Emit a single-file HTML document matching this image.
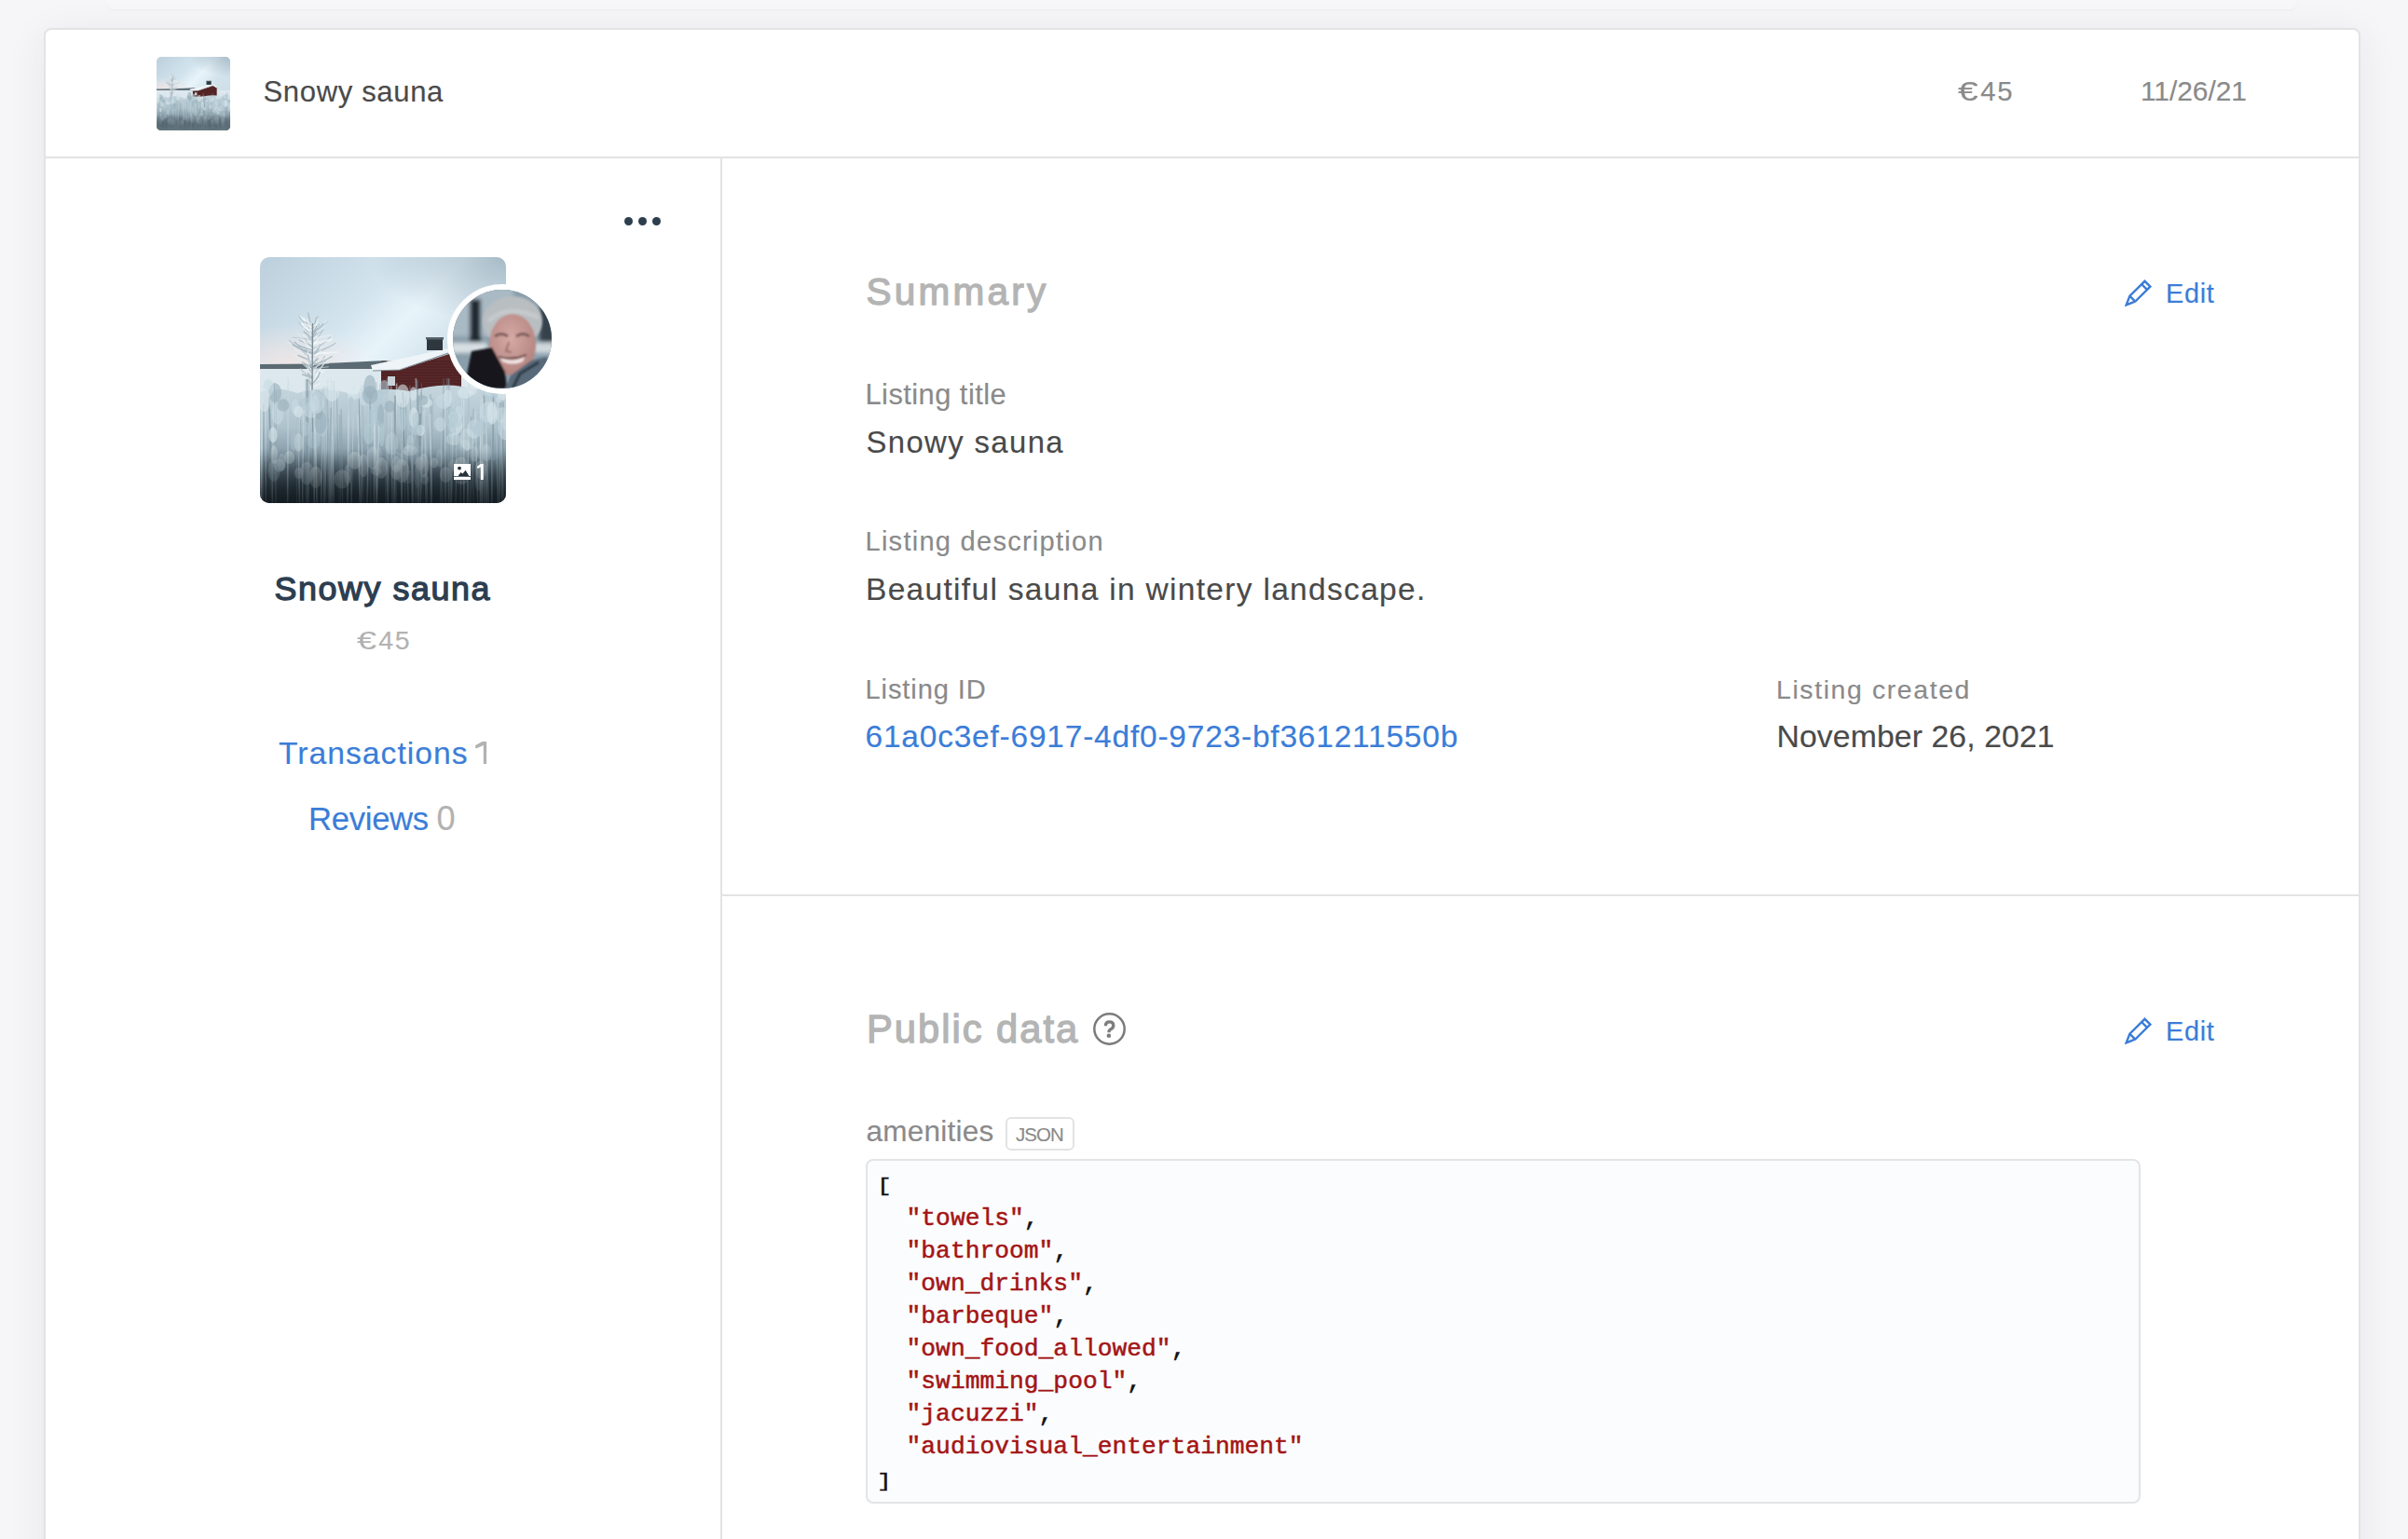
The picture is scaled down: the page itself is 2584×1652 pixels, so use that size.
<!DOCTYPE html>
<html><head><meta charset="utf-8">
<style>
html,body{margin:0;padding:0;}
body{width:2584px;height:1652px;overflow:hidden;background:#f6f6f8;position:relative;font-family:"Liberation Sans",sans-serif;}
.abs{position:absolute;white-space:nowrap;line-height:1;-webkit-text-stroke:0.15px currentColor;}
#strip{position:absolute;left:114px;top:-21px;width:2351px;height:31px;background:#f7f7f9;border-radius:0 0 8px 8px;box-shadow:0 1px 2px rgba(0,0,0,0.04);}
#card{position:absolute;left:47px;top:30px;width:2482px;height:1700px;background:#fff;border:2px solid #e3e3e3;border-radius:8px;box-shadow:0 8px 44px rgba(40,40,70,0.075);}
.hline{position:absolute;height:2px;background:#e3e3e3;}
.vline{position:absolute;width:2px;background:#e3e3e3;}
.gray{color:#8a8a8a;}
.dark{color:#4a4a4a;}
.blue{color:#3b7dd8;}
</style></head>
<body>
<svg width="0" height="0" style="position:absolute"><defs><linearGradient id="dark" x1="0" y1="0" x2="0" y2="1"><stop offset="0" stop-color="#1a242b" stop-opacity="0"/><stop offset="1" stop-color="#141c22" stop-opacity="0.85"/></linearGradient></defs><symbol id="ph" viewBox="0 0 264 264"><defs><linearGradient id="sky" x1="0" y1="0" x2="1" y2="1"><stop offset="0" stop-color="#bccfdc"/><stop offset="0.3" stop-color="#d3e4ee"/><stop offset="0.42" stop-color="#e8f4fa"/><stop offset="0.56" stop-color="#d3e3ec"/><stop offset="1" stop-color="#c6d7e2"/></linearGradient><linearGradient id="reed" x1="0" y1="0" x2="0" y2="1"><stop offset="0" stop-color="#c6d6de"/><stop offset="0.35" stop-color="#afc3cd"/><stop offset="0.58" stop-color="#879da9"/><stop offset="0.76" stop-color="#4b5b66"/><stop offset="0.9" stop-color="#27333b"/><stop offset="1" stop-color="#141c22"/></linearGradient><radialGradient id="glow" cx="0.12" cy="0.9" r="0.35"><stop offset="0" stop-color="#f3e6e4" stop-opacity="0.9"/><stop offset="1" stop-color="#f3e6e4" stop-opacity="0"/></radialGradient><radialGradient id="tr" cx="1" cy="0" r="0.55"><stop offset="0" stop-color="#8fa6b4" stop-opacity="0.7"/><stop offset="1" stop-color="#93a8b5" stop-opacity="0"/></radialGradient></defs><rect width="264" height="264" fill="url(#sky)"/><rect width="264" height="130" fill="url(#glow)"/><rect width="264" height="130" fill="url(#tr)"/><path d="M0 115 L60 114.5 L135 111 L140 113 L140 120.5 L0 120.5 Z" fill="#5c6b73"/><rect x="0" y="120" width="264" height="35" fill="#dde8ee"/><g fill="none" stroke-linecap="round"><path d="M56 94.0 Q52.4 92.0 48.8 82.2" stroke="#e6eef2" stroke-width="0.8" opacity="0.85"/><path d="M56 111.6 Q67.2 109.6 78.4 104.4" stroke="#e6eef2" stroke-width="0.8" opacity="0.85"/><path d="M56 78.2 Q51.5 76.2 47.0 64.8" stroke="#e6eef2" stroke-width="1.2" opacity="0.85"/><path d="M56 111.6 Q53.4 109.6 50.7 97.9" stroke="#e6eef2" stroke-width="0.7" opacity="0.85"/><path d="M56 130.4 Q59.3 128.4 62.6 121.5" stroke="#e6eef2" stroke-width="1.1" opacity="0.85"/><path d="M56 118.4 Q53.2 116.4 50.3 111.9" stroke="#f2f6f8" stroke-width="1.1" opacity="0.85"/><path d="M56 76.3 Q58.3 74.3 60.6 64.9" stroke="#a0b1ba" stroke-width="1.1" opacity="0.85"/><path d="M56 134.8 Q59.1 132.8 62.3 124.4" stroke="#f2f6f8" stroke-width="0.9" opacity="0.85"/><path d="M56 111.1 Q48.6 109.1 41.2 105.6" stroke="#a0b1ba" stroke-width="1.5" opacity="0.85"/><path d="M56 80.0 Q51.3 78.0 46.6 66.8" stroke="#f2f6f8" stroke-width="1.0" opacity="0.85"/><path d="M56 137.4 Q53.8 135.4 51.6 131.3" stroke="#b7c6ce" stroke-width="1.0" opacity="0.85"/><path d="M56 105.8 Q67.5 103.8 78.9 92.4" stroke="#e6eef2" stroke-width="1.1" opacity="0.85"/><path d="M56 117.2 Q53.5 115.2 51.0 111.7" stroke="#a0b1ba" stroke-width="1.0" opacity="0.85"/><path d="M56 117.5 Q58.2 115.5 60.4 108.1" stroke="#f2f6f8" stroke-width="1.1" opacity="0.85"/><path d="M56 86.8 Q51.6 84.8 47.1 80.1" stroke="#a0b1ba" stroke-width="1.4" opacity="0.85"/><path d="M56 77.5 Q51.5 75.5 46.9 65.6" stroke="#f2f6f8" stroke-width="1.4" opacity="0.85"/><path d="M56 90.9 Q62.0 88.9 68.0 77.4" stroke="#a0b1ba" stroke-width="0.8" opacity="0.85"/><path d="M56 84.0 Q59.8 82.0 63.5 72.0" stroke="#a0b1ba" stroke-width="0.8" opacity="0.85"/><path d="M56 91.2 Q52.6 89.2 49.2 77.7" stroke="#b7c6ce" stroke-width="1.3" opacity="0.85"/><path d="M56 107.1 Q46.9 105.1 37.8 99.6" stroke="#e6eef2" stroke-width="1.4" opacity="0.85"/><path d="M56 136.7 Q52.2 134.7 48.5 129.9" stroke="#a0b1ba" stroke-width="0.8" opacity="0.85"/><path d="M56 115.1 Q58.6 113.1 61.1 107.8" stroke="#f2f6f8" stroke-width="0.8" opacity="0.85"/><path d="M56 112.8 Q53.0 110.8 50.0 99.5" stroke="#e6eef2" stroke-width="1.2" opacity="0.85"/><path d="M56 76.8 Q59.1 74.8 62.3 63.3" stroke="#b7c6ce" stroke-width="1.2" opacity="0.85"/><path d="M56 104.2 Q59.4 102.2 62.8 96.5" stroke="#a0b1ba" stroke-width="0.9" opacity="0.85"/><path d="M56 81.8 Q48.8 79.8 41.6 69.9" stroke="#a0b1ba" stroke-width="0.8" opacity="0.85"/><path d="M56 73.6 Q49.7 71.6 43.5 63.3" stroke="#f2f6f8" stroke-width="1.4" opacity="0.85"/><path d="M56 123.6 Q52.1 121.6 48.1 113.2" stroke="#e6eef2" stroke-width="0.9" opacity="0.85"/><path d="M56 96.9 Q52.1 94.9 48.2 87.3" stroke="#b7c6ce" stroke-width="1.2" opacity="0.85"/><path d="M56 125.6 Q62.5 123.6 69.0 113.8" stroke="#f2f6f8" stroke-width="1.3" opacity="0.85"/><path d="M56 87.4 Q62.5 85.4 68.9 73.5" stroke="#e6eef2" stroke-width="1.3" opacity="0.85"/><path d="M56 104.1 Q51.6 102.1 47.2 96.7" stroke="#b7c6ce" stroke-width="1.4" opacity="0.85"/><path d="M56 139.2 Q59.8 137.2 63.5 136.0" stroke="#f2f6f8" stroke-width="1.1" opacity="0.85"/><path d="M56 95.0 Q48.7 93.0 41.5 87.2" stroke="#e6eef2" stroke-width="1.2" opacity="0.85"/><path d="M56 126.4 Q53.5 124.4 51.0 115.0" stroke="#a0b1ba" stroke-width="1.3" opacity="0.85"/><path d="M56 104.5 Q51.8 102.5 47.6 101.5" stroke="#b7c6ce" stroke-width="1.5" opacity="0.85"/><path d="M56 121.1 Q50.6 119.1 45.3 110.4" stroke="#e6eef2" stroke-width="0.8" opacity="0.85"/><path d="M56 80.6 Q53.0 78.6 50.0 71.3" stroke="#f2f6f8" stroke-width="1.2" opacity="0.85"/><path d="M56 104.3 Q69.6 102.3 83.1 102.0" stroke="#f2f6f8" stroke-width="1.3" opacity="0.85"/><path d="M56 121.4 Q53.3 119.4 50.5 114.2" stroke="#f2f6f8" stroke-width="1.4" opacity="0.85"/><path d="M56 128.2 Q59.1 126.2 62.2 120.2" stroke="#b7c6ce" stroke-width="1.3" opacity="0.85"/><path d="M56 94.2 Q48.2 92.2 40.4 81.2" stroke="#e6eef2" stroke-width="1.0" opacity="0.85"/><path d="M56 103.2 Q46.6 101.2 37.2 91.2" stroke="#a0b1ba" stroke-width="1.4" opacity="0.85"/><path d="M56 80.9 Q53.0 78.9 50.0 69.6" stroke="#a0b1ba" stroke-width="1.2" opacity="0.85"/><path d="M56 124.8 Q58.9 122.8 61.8 116.1" stroke="#e6eef2" stroke-width="1.0" opacity="0.85"/><path d="M56 107.2 Q47.7 105.2 39.3 94.6" stroke="#e6eef2" stroke-width="0.7" opacity="0.85"/><path d="M56 85.0 Q58.3 83.0 60.7 76.3" stroke="#a0b1ba" stroke-width="1.3" opacity="0.85"/><path d="M56 134.0 Q52.5 132.0 49.0 123.7" stroke="#f2f6f8" stroke-width="1.1" opacity="0.85"/><path d="M56 108.3 Q48.7 106.3 41.4 95.2" stroke="#b7c6ce" stroke-width="1.4" opacity="0.85"/><path d="M56 85.8 Q61.6 83.8 67.3 78.5" stroke="#a0b1ba" stroke-width="0.8" opacity="0.85"/><path d="M56 88.4 Q53.3 86.4 50.7 75.6" stroke="#e6eef2" stroke-width="0.8" opacity="0.85"/><path d="M56 120.7 Q62.9 118.7 69.8 107.1" stroke="#f2f6f8" stroke-width="0.9" opacity="0.85"/><path d="M56 136.8 Q59.0 134.8 62.0 132.8" stroke="#f2f6f8" stroke-width="1.0" opacity="0.85"/><path d="M56 107.1 Q61.9 105.1 67.8 104.0" stroke="#b7c6ce" stroke-width="1.0" opacity="0.85"/><path d="M56 95.0 Q49.0 93.0 42.0 89.0" stroke="#a0b1ba" stroke-width="1.2" opacity="0.85"/><path d="M56 106.8 Q53.3 104.8 50.5 93.2" stroke="#f2f6f8" stroke-width="0.8" opacity="0.85"/><path d="M56 90.1 Q53.6 88.1 51.3 79.0" stroke="#b7c6ce" stroke-width="1.4" opacity="0.85"/><path d="M56 129.8 Q50.8 127.8 45.7 126.0" stroke="#a0b1ba" stroke-width="1.4" opacity="0.85"/><path d="M56 110.8 Q65.3 108.8 74.5 99.2" stroke="#e6eef2" stroke-width="0.8" opacity="0.85"/><path d="M56 132.9 Q59.0 130.9 62.0 121.3" stroke="#e6eef2" stroke-width="0.8" opacity="0.85"/><path d="M56 130.2 Q53.7 128.2 51.4 128.1" stroke="#a0b1ba" stroke-width="1.5" opacity="0.85"/><path d="M56 100.4 Q42.5 98.4 29.1 92.1" stroke="#e6eef2" stroke-width="0.9" opacity="0.85"/><path d="M56 79.4 Q59.0 77.4 62.0 66.3" stroke="#f2f6f8" stroke-width="1.2" opacity="0.85"/><path d="M56 108.1 Q60.3 106.1 64.6 102.9" stroke="#f2f6f8" stroke-width="1.3" opacity="0.85"/><path d="M56 139.6 Q58.1 137.6 60.1 131.5" stroke="#f2f6f8" stroke-width="0.9" opacity="0.85"/><path d="M56 102.4 Q45.5 100.4 35.0 93.8" stroke="#a0b1ba" stroke-width="1.4" opacity="0.85"/><path d="M56 138.0 Q58.7 136.0 61.4 131.9" stroke="#f2f6f8" stroke-width="1.4" opacity="0.85"/><path d="M56 120.1 Q62.8 118.1 69.6 106.3" stroke="#b7c6ce" stroke-width="1.4" opacity="0.85"/><path d="M56 73.0 Q51.3 71.0 46.6 69.0" stroke="#a0b1ba" stroke-width="0.8" opacity="0.85"/><path d="M56 129.2 Q49.8 127.2 43.6 120.0" stroke="#b7c6ce" stroke-width="1.3" opacity="0.85"/><path d="M56 75.1 Q58.9 73.1 61.8 69.9" stroke="#e6eef2" stroke-width="1.5" opacity="0.85"/><path d="M56 138.1 Q59.2 136.1 62.4 133.5" stroke="#b7c6ce" stroke-width="0.8" opacity="0.85"/><path d="M56 94.8 Q58.9 92.8 61.8 89.8" stroke="#f2f6f8" stroke-width="1.3" opacity="0.85"/><path d="M56 78.2 Q62.8 76.2 69.6 71.5" stroke="#e6eef2" stroke-width="0.9" opacity="0.85"/><path d="M56 114.8 Q53.2 112.8 50.5 104.9" stroke="#f2f6f8" stroke-width="1.3" opacity="0.85"/><path d="M56 131.8 Q59.6 129.8 63.2 128.0" stroke="#a0b1ba" stroke-width="1.3" opacity="0.85"/><path d="M56 115.7 Q53.6 113.7 51.2 104.9" stroke="#a0b1ba" stroke-width="1.3" opacity="0.85"/><path d="M56 81.5 Q50.4 79.5 44.8 69.6" stroke="#e6eef2" stroke-width="1.2" opacity="0.85"/><path d="M56 132.7 Q51.4 130.7 46.8 129.7" stroke="#f2f6f8" stroke-width="0.7" opacity="0.85"/><path d="M56 115.3 Q66.6 113.3 77.3 106.6" stroke="#a0b1ba" stroke-width="1.2" opacity="0.85"/><path d="M56 114.6 Q64.3 112.6 72.6 107.1" stroke="#e6eef2" stroke-width="0.8" opacity="0.85"/><path d="M56 135.4 Q60.7 133.4 65.3 124.5" stroke="#e6eef2" stroke-width="1.1" opacity="0.85"/><path d="M56 127.0 Q62.6 125.0 69.3 122.3" stroke="#f2f6f8" stroke-width="1.2" opacity="0.85"/><path d="M56 103.3 Q68.7 101.3 81.3 92.1" stroke="#b7c6ce" stroke-width="1.2" opacity="0.85"/><path d="M56 115.7 Q58.7 113.7 61.4 105.9" stroke="#b7c6ce" stroke-width="1.3" opacity="0.85"/><path d="M56 114.2 Q59.2 112.2 62.5 109.0" stroke="#a0b1ba" stroke-width="1.2" opacity="0.85"/><path d="M56 119.1 Q63.3 117.1 70.6 111.5" stroke="#b7c6ce" stroke-width="1.1" opacity="0.85"/><path d="M56 80.1 Q63.7 78.1 71.5 66.8" stroke="#e6eef2" stroke-width="0.7" opacity="0.85"/><path d="M56 103.2 Q43.6 101.2 31.3 89.3" stroke="#a0b1ba" stroke-width="1.0" opacity="0.85"/><path d="M56 134.3 Q61.1 132.3 66.1 130.6" stroke="#e6eef2" stroke-width="1.1" opacity="0.85"/><path d="M56 136.8 Q53.7 134.8 51.3 124.1" stroke="#b7c6ce" stroke-width="1.3" opacity="0.85"/><path d="M56 87.7 Q65.8 85.7 75.7 83.8" stroke="#e6eef2" stroke-width="1.5" opacity="0.85"/><path d="M56 118.3 Q50.7 116.3 45.4 112.2" stroke="#a0b1ba" stroke-width="1.0" opacity="0.85"/><path d="M56 129.1 Q54.0 127.1 52.0 125.7" stroke="#a0b1ba" stroke-width="1.4" opacity="0.85"/><path d="M56 120.5 Q64.7 118.5 73.4 117.7" stroke="#b7c6ce" stroke-width="1.0" opacity="0.85"/><path d="M56 131.2 Q53.7 129.2 51.4 118.9" stroke="#b7c6ce" stroke-width="0.9" opacity="0.85"/><path d="M56 75.5 Q50.7 73.5 45.3 70.5" stroke="#f2f6f8" stroke-width="0.9" opacity="0.85"/><path d="M56 106.7 Q60.2 104.7 64.4 94.1" stroke="#a0b1ba" stroke-width="1.3" opacity="0.85"/><path d="M56 114.9 Q45.7 112.9 35.3 104.3" stroke="#f2f6f8" stroke-width="0.7" opacity="0.85"/><path d="M56 121.8 Q50.8 119.8 45.6 114.0" stroke="#b7c6ce" stroke-width="1.4" opacity="0.85"/><path d="M56 109.4 Q59.8 107.4 63.7 103.8" stroke="#b7c6ce" stroke-width="1.3" opacity="0.85"/><path d="M56 138.4 Q53.5 136.4 50.9 130.6" stroke="#b7c6ce" stroke-width="1.2" opacity="0.85"/><path d="M56 80.1 Q62.1 78.1 68.3 71.5" stroke="#a0b1ba" stroke-width="1.1" opacity="0.85"/><path d="M56 94.6 Q66.2 92.6 76.4 89.7" stroke="#f2f6f8" stroke-width="0.8" opacity="0.85"/><path d="M56 109.8 Q61.4 107.8 66.8 97.2" stroke="#f2f6f8" stroke-width="1.3" opacity="0.85"/><path d="M56 100.1 Q48.9 98.1 41.7 94.8" stroke="#a0b1ba" stroke-width="1.3" opacity="0.85"/><path d="M56 105.9 Q64.8 103.9 73.6 102.8" stroke="#f2f6f8" stroke-width="1.4" opacity="0.85"/><path d="M56 98.2 Q65.6 96.2 75.3 86.0" stroke="#b7c6ce" stroke-width="1.4" opacity="0.85"/><path d="M56 73.5 Q53.9 71.5 51.7 59.9" stroke="#a0b1ba" stroke-width="1.1" opacity="0.85"/><path d="M56 77.0 Q48.9 75.0 41.8 63.3" stroke="#a0b1ba" stroke-width="0.9" opacity="0.85"/><path d="M56 79.4 Q53.0 77.4 50.1 66.1" stroke="#e6eef2" stroke-width="1.3" opacity="0.85"/><path d="M56 116.0 Q64.7 114.0 73.5 114.0" stroke="#e6eef2" stroke-width="0.8" opacity="0.85"/><path d="M56 110.7 Q53.6 108.7 51.2 101.2" stroke="#f2f6f8" stroke-width="1.1" opacity="0.85"/><path d="M56 101.7 Q67.9 99.7 79.7 93.5" stroke="#b7c6ce" stroke-width="1.2" opacity="0.85"/><path d="M56 98.4 Q51.3 96.4 46.7 89.9" stroke="#e6eef2" stroke-width="1.5" opacity="0.85"/><path d="M56 90.9 Q50.9 88.9 45.9 83.2" stroke="#f2f6f8" stroke-width="0.9" opacity="0.85"/><path d="M56 88.8 Q45.3 86.8 34.6 86.1" stroke="#b7c6ce" stroke-width="0.9" opacity="0.85"/><path d="M56 132.2 Q60.6 130.2 65.1 122.2" stroke="#f2f6f8" stroke-width="1.4" opacity="0.85"/><path d="M56 87.4 Q58.3 85.4 60.6 81.1" stroke="#a0b1ba" stroke-width="1.0" opacity="0.85"/><path d="M56 72.5 Q52.8 70.5 49.6 68.0" stroke="#e6eef2" stroke-width="1.5" opacity="0.85"/><path d="M56 93.2 Q66.5 91.2 77.0 88.0" stroke="#f2f6f8" stroke-width="1.4" opacity="0.85"/><path d="M56 79.4 Q50.1 77.4 44.2 71.6" stroke="#f2f6f8" stroke-width="1.4" opacity="0.85"/><path d="M56 75.8 Q50.9 73.8 45.9 71.3" stroke="#e6eef2" stroke-width="1.5" opacity="0.85"/><path d="M56 81.6 Q58.4 79.6 60.7 74.3" stroke="#a0b1ba" stroke-width="1.3" opacity="0.85"/><path d="M56 93.4 Q59.2 91.4 62.4 87.4" stroke="#f2f6f8" stroke-width="0.8" opacity="0.85"/><path d="M56 135.6 Q60.2 133.6 64.3 123.6" stroke="#a0b1ba" stroke-width="1.5" opacity="0.85"/><path d="M56 102.1 Q59.4 100.1 62.8 95.9" stroke="#e6eef2" stroke-width="1.5" opacity="0.85"/><path d="M56 80.4 Q64.3 78.4 72.6 69.2" stroke="#b7c6ce" stroke-width="0.9" opacity="0.85"/><path d="M56 126.7 Q53.5 124.7 51.0 120.2" stroke="#f2f6f8" stroke-width="1.4" opacity="0.85"/><path d="M56 85.1 Q51.1 83.1 46.2 75.5" stroke="#e6eef2" stroke-width="0.9" opacity="0.85"/></g><path d="M56 146 L56.5 71" stroke="#7b8b94" stroke-width="1.4"/><path d="M130 121 L150 121 L203 104 L216 112 L216 145 L130 145 Z" fill="#5a2829"/><path d="M130 112 L216 112" stroke="#3d1a1c" stroke-width="0.8" opacity="0.7"/><path d="M130 115 L216 115" stroke="#3d1a1c" stroke-width="0.8" opacity="0.7"/><path d="M130 118 L216 118" stroke="#3d1a1c" stroke-width="0.8" opacity="0.7"/><path d="M130 121 L216 121" stroke="#3d1a1c" stroke-width="0.8" opacity="0.7"/><path d="M130 124 L216 124" stroke="#3d1a1c" stroke-width="0.8" opacity="0.7"/><path d="M130 127 L216 127" stroke="#3d1a1c" stroke-width="0.8" opacity="0.7"/><path d="M130 130 L216 130" stroke="#3d1a1c" stroke-width="0.8" opacity="0.7"/><path d="M130 133 L216 133" stroke="#3d1a1c" stroke-width="0.8" opacity="0.7"/><path d="M130 136 L216 136" stroke="#3d1a1c" stroke-width="0.8" opacity="0.7"/><path d="M130 139 L216 139" stroke="#3d1a1c" stroke-width="0.8" opacity="0.7"/><path d="M130 142 L216 142" stroke="#3d1a1c" stroke-width="0.8" opacity="0.7"/><rect x="137" y="128" width="8" height="10" fill="#c9d3d8"/><path d="M119 116 L202 98 L216 107 L214 110 L202 103 L150 121 L121 122 Z" fill="#eef4f7"/><path d="M121 122 L150 121 L202 103" stroke="#7e8d95" stroke-width="1.2" fill="none"/><rect x="179" y="87" width="17" height="13" fill="#2e373d"/><rect x="178" y="86" width="19" height="2.5" fill="#56636b"/><path d="M0 145 Q20 138 40 146 Q70 136 100 148 Q130 138 160 144 Q200 132 230 142 Q250 138 264 140 L264 264 L0 264 Z" fill="url(#reed)"/><path d="M165.1 264 L162.5 147.0" stroke="#d6e3e9" stroke-width="0.6" opacity="0.55"/><path d="M242.9 264 L241.9 140.1" stroke="#c7d8e0" stroke-width="1.7" opacity="0.55"/><path d="M71.9 264 L73.4 173.0" stroke="#6f8691" stroke-width="0.7" opacity="0.55"/><path d="M182.0 264 L183.6 171.4" stroke="#8aa2ae" stroke-width="0.6" opacity="0.55"/><path d="M241.9 264 L240.3 157.8" stroke="#c7d8e0" stroke-width="0.6" opacity="0.55"/><path d="M125.4 264 L127.9 173.0" stroke="#d6e3e9" stroke-width="1.5" opacity="0.55"/><path d="M215.1 264 L216.9 134.2" stroke="#d6e3e9" stroke-width="0.8" opacity="0.55"/><path d="M195.0 264 L193.9 166.7" stroke="#a9bfca" stroke-width="1.3" opacity="0.55"/><path d="M84.4 264 L82.5 145.0" stroke="#6f8691" stroke-width="0.7" opacity="0.55"/><path d="M198.8 264 L198.7 139.6" stroke="#c7d8e0" stroke-width="1.4" opacity="0.55"/><path d="M143.8 264 L146.7 135.6" stroke="#d6e3e9" stroke-width="1.7" opacity="0.55"/><path d="M69.9 264 L72.9 132.0" stroke="#c7d8e0" stroke-width="1.1" opacity="0.55"/><path d="M256.6 264 L257.4 136.1" stroke="#a9bfca" stroke-width="1.1" opacity="0.55"/><path d="M178.0 264 L176.7 163.2" stroke="#c7d8e0" stroke-width="1.5" opacity="0.55"/><path d="M73.8 264 L72.0 140.6" stroke="#8aa2ae" stroke-width="1.5" opacity="0.55"/><path d="M65.3 264 L67.8 139.5" stroke="#a9bfca" stroke-width="0.9" opacity="0.55"/><path d="M49.7 264 L49.7 131.0" stroke="#8aa2ae" stroke-width="1.8" opacity="0.55"/><path d="M61.1 264 L58.7 166.0" stroke="#d6e3e9" stroke-width="1.8" opacity="0.55"/><path d="M125.3 264 L122.6 166.5" stroke="#d6e3e9" stroke-width="1.7" opacity="0.55"/><path d="M77.5 264 L79.5 133.6" stroke="#a9bfca" stroke-width="1.3" opacity="0.55"/><path d="M51.3 264 L51.0 131.5" stroke="#6f8691" stroke-width="1.6" opacity="0.55"/><path d="M68.6 264 L69.2 164.6" stroke="#c7d8e0" stroke-width="0.7" opacity="0.55"/><path d="M163.7 264 L160.9 138.2" stroke="#8aa2ae" stroke-width="1.0" opacity="0.55"/><path d="M264.0 264 L265.9 129.8" stroke="#a9bfca" stroke-width="1.6" opacity="0.55"/><path d="M108.0 264 L106.2 145.5" stroke="#6f8691" stroke-width="1.0" opacity="0.55"/><path d="M210.0 264 L211.7 153.8" stroke="#c7d8e0" stroke-width="1.1" opacity="0.55"/><path d="M175.3 264 L173.3 135.3" stroke="#6f8691" stroke-width="0.7" opacity="0.55"/><path d="M183.6 264 L183.1 147.3" stroke="#8aa2ae" stroke-width="1.4" opacity="0.55"/><path d="M13.6 264 L10.7 163.0" stroke="#8aa2ae" stroke-width="1.1" opacity="0.55"/><path d="M202.4 264 L201.8 165.7" stroke="#a9bfca" stroke-width="1.1" opacity="0.55"/><path d="M248.7 264 L250.6 148.4" stroke="#a9bfca" stroke-width="1.1" opacity="0.55"/><path d="M107.2 264 L105.0 169.5" stroke="#d6e3e9" stroke-width="1.5" opacity="0.55"/><path d="M13.6 264 L14.4 134.7" stroke="#d6e3e9" stroke-width="0.7" opacity="0.55"/><path d="M97.9 264 L95.9 151.7" stroke="#a9bfca" stroke-width="1.0" opacity="0.55"/><path d="M45.4 264 L47.2 131.2" stroke="#d6e3e9" stroke-width="1.2" opacity="0.55"/><path d="M255.3 264 L252.5 137.3" stroke="#a9bfca" stroke-width="1.6" opacity="0.55"/><path d="M241.0 264 L240.3 142.8" stroke="#6f8691" stroke-width="1.7" opacity="0.55"/><path d="M238.7 264 L240.9 157.2" stroke="#a9bfca" stroke-width="1.4" opacity="0.55"/><path d="M164.0 264 L162.1 156.9" stroke="#a9bfca" stroke-width="1.6" opacity="0.55"/><path d="M57.6 264 L56.7 146.8" stroke="#6f8691" stroke-width="0.8" opacity="0.55"/><path d="M39.5 264 L39.8 173.6" stroke="#a9bfca" stroke-width="0.6" opacity="0.55"/><path d="M200.0 264 L200.6 129.8" stroke="#8aa2ae" stroke-width="0.7" opacity="0.55"/><path d="M145.2 264 L144.1 157.5" stroke="#8aa2ae" stroke-width="1.4" opacity="0.55"/><path d="M65.8 264 L65.4 146.3" stroke="#8aa2ae" stroke-width="1.1" opacity="0.55"/><path d="M6.2 264 L5.9 157.1" stroke="#d6e3e9" stroke-width="1.2" opacity="0.55"/><path d="M163.3 264 L162.7 166.5" stroke="#a9bfca" stroke-width="1.6" opacity="0.55"/><path d="M17.7 264 L17.4 144.9" stroke="#8aa2ae" stroke-width="0.7" opacity="0.55"/><path d="M134.7 264 L136.1 129.9" stroke="#a9bfca" stroke-width="0.7" opacity="0.55"/><path d="M205.3 264 L207.7 152.0" stroke="#c7d8e0" stroke-width="1.5" opacity="0.55"/><path d="M172.3 264 L175.3 164.9" stroke="#c7d8e0" stroke-width="1.6" opacity="0.55"/><path d="M193.3 264 L195.6 166.3" stroke="#a9bfca" stroke-width="0.8" opacity="0.55"/><path d="M76.0 264 L77.3 166.1" stroke="#a9bfca" stroke-width="1.4" opacity="0.55"/><path d="M58.4 264 L56.3 167.2" stroke="#6f8691" stroke-width="1.5" opacity="0.55"/><path d="M236.7 264 L236.7 140.9" stroke="#d6e3e9" stroke-width="0.8" opacity="0.55"/><path d="M242.9 264 L241.3 137.8" stroke="#8aa2ae" stroke-width="1.3" opacity="0.55"/><path d="M98.3 264 L100.9 137.4" stroke="#d6e3e9" stroke-width="0.8" opacity="0.55"/><path d="M179.4 264 L178.0 170.1" stroke="#a9bfca" stroke-width="1.6" opacity="0.55"/><path d="M202.8 264 L202.5 130.3" stroke="#8aa2ae" stroke-width="1.8" opacity="0.55"/><path d="M137.7 264 L137.9 160.4" stroke="#c7d8e0" stroke-width="0.9" opacity="0.55"/><path d="M226.1 264 L229.1 162.7" stroke="#8aa2ae" stroke-width="0.9" opacity="0.55"/><path d="M152.4 264 L150.5 144.9" stroke="#c7d8e0" stroke-width="1.1" opacity="0.55"/><path d="M196.3 264 L197.1 130.3" stroke="#6f8691" stroke-width="0.9" opacity="0.55"/><path d="M259.8 264 L261.3 155.5" stroke="#8aa2ae" stroke-width="1.5" opacity="0.55"/><path d="M58.5 264 L57.7 141.7" stroke="#d6e3e9" stroke-width="1.1" opacity="0.55"/><path d="M12.6 264 L9.7 151.0" stroke="#6f8691" stroke-width="1.4" opacity="0.55"/><path d="M0.7 264 L0.9 144.7" stroke="#c7d8e0" stroke-width="1.2" opacity="0.55"/><path d="M109.1 264 L109.8 142.2" stroke="#a9bfca" stroke-width="0.8" opacity="0.55"/><path d="M125.4 264 L125.1 134.3" stroke="#a9bfca" stroke-width="1.4" opacity="0.55"/><path d="M16.8 264 L15.4 134.8" stroke="#8aa2ae" stroke-width="1.1" opacity="0.55"/><path d="M3.0 264 L3.6 158.3" stroke="#6f8691" stroke-width="1.7" opacity="0.55"/><path d="M152.7 264 L151.2 156.3" stroke="#6f8691" stroke-width="1.5" opacity="0.55"/><path d="M238.5 264 L236.6 130.1" stroke="#6f8691" stroke-width="0.6" opacity="0.55"/><path d="M42.0 264 L42.3 170.9" stroke="#c7d8e0" stroke-width="0.6" opacity="0.55"/><path d="M248.4 264 L249.3 134.7" stroke="#a9bfca" stroke-width="1.2" opacity="0.55"/><path d="M171.0 264 L169.8 147.5" stroke="#6f8691" stroke-width="0.8" opacity="0.55"/><path d="M79.3 264 L76.3 130.3" stroke="#d6e3e9" stroke-width="1.5" opacity="0.55"/><path d="M222.9 264 L223.9 163.0" stroke="#d6e3e9" stroke-width="0.7" opacity="0.55"/><path d="M46.3 264 L43.5 174.8" stroke="#8aa2ae" stroke-width="0.9" opacity="0.55"/><path d="M88.6 264 L87.2 163.2" stroke="#8aa2ae" stroke-width="1.5" opacity="0.55"/><path d="M146.2 264 L145.0 148.5" stroke="#6f8691" stroke-width="1.8" opacity="0.55"/><path d="M245.1 264 L242.2 170.0" stroke="#c7d8e0" stroke-width="1.7" opacity="0.55"/><path d="M68.7 264 L70.2 139.1" stroke="#a9bfca" stroke-width="1.7" opacity="0.55"/><path d="M86.3 264 L85.6 169.4" stroke="#8aa2ae" stroke-width="1.3" opacity="0.55"/><path d="M224.9 264 L226.9 171.3" stroke="#6f8691" stroke-width="1.2" opacity="0.55"/><path d="M184.2 264 L182.6 168.3" stroke="#d6e3e9" stroke-width="1.7" opacity="0.55"/><path d="M233.6 264 L231.0 165.1" stroke="#d6e3e9" stroke-width="1.3" opacity="0.55"/><path d="M240.4 264 L241.2 134.8" stroke="#c7d8e0" stroke-width="0.7" opacity="0.55"/><path d="M42.7 264 L40.5 173.9" stroke="#c7d8e0" stroke-width="0.6" opacity="0.55"/><path d="M169.9 264 L167.3 130.0" stroke="#c7d8e0" stroke-width="1.5" opacity="0.55"/><path d="M155.9 264 L153.3 145.1" stroke="#6f8691" stroke-width="1.7" opacity="0.55"/><path d="M229.1 264 L227.3 171.0" stroke="#d6e3e9" stroke-width="0.7" opacity="0.55"/><path d="M29.6 264 L30.3 129.6" stroke="#c7d8e0" stroke-width="1.6" opacity="0.55"/><path d="M75.9 264 L76.7 132.7" stroke="#c7d8e0" stroke-width="1.6" opacity="0.55"/><path d="M77.7 264 L76.3 143.8" stroke="#8aa2ae" stroke-width="0.6" opacity="0.55"/><path d="M74.6 264 L76.2 161.6" stroke="#8aa2ae" stroke-width="1.7" opacity="0.55"/><path d="M158.9 264 L156.1 150.4" stroke="#8aa2ae" stroke-width="1.3" opacity="0.55"/><path d="M109.0 264 L110.2 148.5" stroke="#c7d8e0" stroke-width="1.0" opacity="0.55"/><path d="M142.0 264 L140.7 138.2" stroke="#c7d8e0" stroke-width="1.3" opacity="0.55"/><path d="M115.1 264 L118.0 152.6" stroke="#8aa2ae" stroke-width="1.5" opacity="0.55"/><path d="M1.2 264 L3.1 151.1" stroke="#d6e3e9" stroke-width="1.4" opacity="0.55"/><path d="M255.3 264 L258.0 155.9" stroke="#6f8691" stroke-width="0.9" opacity="0.55"/><path d="M74.9 264 L72.6 138.1" stroke="#a9bfca" stroke-width="1.2" opacity="0.55"/><path d="M168.0 264 L168.8 131.8" stroke="#6f8691" stroke-width="1.5" opacity="0.55"/><path d="M93.9 264 L95.4 146.9" stroke="#d6e3e9" stroke-width="1.7" opacity="0.55"/><path d="M111.4 264 L110.0 158.4" stroke="#8aa2ae" stroke-width="0.8" opacity="0.55"/><path d="M237.9 264 L238.7 151.6" stroke="#d6e3e9" stroke-width="1.8" opacity="0.55"/><path d="M249.2 264 L250.7 134.0" stroke="#6f8691" stroke-width="1.5" opacity="0.55"/><path d="M170.6 264 L172.8 144.4" stroke="#8aa2ae" stroke-width="1.2" opacity="0.55"/><path d="M118.9 264 L118.5 154.0" stroke="#8aa2ae" stroke-width="0.8" opacity="0.55"/><path d="M204.2 264 L205.0 155.2" stroke="#a9bfca" stroke-width="1.0" opacity="0.55"/><path d="M183.9 264 L185.1 151.9" stroke="#8aa2ae" stroke-width="1.0" opacity="0.55"/><path d="M222.7 264 L224.1 135.3" stroke="#a9bfca" stroke-width="1.8" opacity="0.55"/><path d="M159.2 264 L157.3 144.4" stroke="#a9bfca" stroke-width="1.0" opacity="0.55"/><path d="M257.4 264 L258.4 162.3" stroke="#c7d8e0" stroke-width="0.8" opacity="0.55"/><path d="M51.6 264 L53.0 135.1" stroke="#a9bfca" stroke-width="1.6" opacity="0.55"/><path d="M114.8 264 L117.1 137.2" stroke="#c7d8e0" stroke-width="0.9" opacity="0.55"/><path d="M122.5 264 L122.5 128.6" stroke="#d6e3e9" stroke-width="1.4" opacity="0.55"/><path d="M166.9 264 L168.4 149.8" stroke="#a9bfca" stroke-width="0.9" opacity="0.55"/><path d="M1.5 264 L2.0 139.4" stroke="#d6e3e9" stroke-width="1.4" opacity="0.55"/><path d="M170.9 264 L171.9 167.8" stroke="#6f8691" stroke-width="1.6" opacity="0.55"/><path d="M169.4 264 L170.6 149.3" stroke="#8aa2ae" stroke-width="0.9" opacity="0.55"/><path d="M236.2 264 L237.0 139.4" stroke="#d6e3e9" stroke-width="1.5" opacity="0.55"/><path d="M66.0 264 L68.2 147.9" stroke="#d6e3e9" stroke-width="0.6" opacity="0.55"/><path d="M136.8 264 L135.8 159.1" stroke="#a9bfca" stroke-width="1.7" opacity="0.55"/><path d="M2.8 264 L3.1 167.1" stroke="#c7d8e0" stroke-width="0.6" opacity="0.55"/><path d="M42.5 264 L40.1 164.7" stroke="#a9bfca" stroke-width="1.2" opacity="0.55"/><path d="M151.7 264 L152.5 153.4" stroke="#d6e3e9" stroke-width="1.2" opacity="0.55"/><path d="M218.9 264 L218.6 152.5" stroke="#d6e3e9" stroke-width="1.5" opacity="0.55"/><path d="M261.4 264 L259.2 136.6" stroke="#6f8691" stroke-width="1.5" opacity="0.55"/><path d="M259.9 264 L259.2 144.7" stroke="#c7d8e0" stroke-width="0.9" opacity="0.55"/><ellipse cx="16.2" cy="145.7" rx="6.8" ry="10.4" fill="#98afbb" opacity="0.60"/><ellipse cx="153.2" cy="149.1" rx="7.4" ry="12.5" fill="#dbe7ec" opacity="0.60"/><ellipse cx="139.1" cy="160.3" rx="5.8" ry="6.3" fill="#98afbb" opacity="0.60"/><ellipse cx="245.4" cy="145.0" rx="5.8" ry="9.5" fill="#b3c9d3" opacity="0.60"/><ellipse cx="59.7" cy="236.3" rx="7.0" ry="11.6" fill="#dbe7ec" opacity="0.35"/><ellipse cx="209.9" cy="180.2" rx="7.6" ry="10.2" fill="#dbe7ec" opacity="0.60"/><ellipse cx="205.9" cy="185.9" rx="4.6" ry="8.0" fill="#b3c9d3" opacity="0.60"/><ellipse cx="66.9" cy="181.5" rx="5.9" ry="11.4" fill="#b3c9d3" opacity="0.60"/><ellipse cx="210.9" cy="174.5" rx="4.9" ry="8.9" fill="#dbe7ec" opacity="0.60"/><ellipse cx="164.6" cy="146.7" rx="3.9" ry="7.4" fill="#dbe7ec" opacity="0.60"/><ellipse cx="101.7" cy="146.7" rx="7.7" ry="6.1" fill="#dbe7ec" opacity="0.60"/><ellipse cx="219.5" cy="202.6" rx="6.9" ry="6.7" fill="#c8dae2" opacity="0.35"/><ellipse cx="19.0" cy="167.9" rx="6.5" ry="11.8" fill="#c8dae2" opacity="0.60"/><ellipse cx="49.0" cy="184.1" rx="4.3" ry="8.2" fill="#b3c9d3" opacity="0.60"/><ellipse cx="141.1" cy="200.2" rx="7.0" ry="12.2" fill="#c8dae2" opacity="0.35"/><ellipse cx="208.1" cy="223.6" rx="6.0" ry="6.7" fill="#b3c9d3" opacity="0.35"/><ellipse cx="20.8" cy="223.6" rx="6.3" ry="7.1" fill="#c8dae2" opacity="0.35"/><ellipse cx="61.8" cy="152.2" rx="6.3" ry="8.9" fill="#98afbb" opacity="0.60"/><ellipse cx="239.0" cy="209.4" rx="6.0" ry="9.3" fill="#b3c9d3" opacity="0.35"/><ellipse cx="227.8" cy="138.7" rx="5.8" ry="9.5" fill="#dbe7ec" opacity="0.60"/><ellipse cx="175.6" cy="223.7" rx="5.6" ry="13.0" fill="#dbe7ec" opacity="0.35"/><ellipse cx="178.4" cy="156.4" rx="6.8" ry="5.2" fill="#dbe7ec" opacity="0.60"/><ellipse cx="161.0" cy="207.6" rx="7.9" ry="5.8" fill="#dbe7ec" opacity="0.35"/><ellipse cx="127.8" cy="215.2" rx="3.2" ry="10.7" fill="#b3c9d3" opacity="0.35"/><ellipse cx="165.1" cy="172.5" rx="5.0" ry="11.2" fill="#dbe7ec" opacity="0.60"/><ellipse cx="146.3" cy="231.1" rx="5.6" ry="8.4" fill="#dbe7ec" opacity="0.35"/><ellipse cx="146.3" cy="222.3" rx="5.1" ry="8.9" fill="#dbe7ec" opacity="0.35"/><ellipse cx="88.1" cy="238.4" rx="8.8" ry="10.2" fill="#dbe7ec" opacity="0.35"/><ellipse cx="209.1" cy="171.8" rx="7.3" ry="6.0" fill="#dbe7ec" opacity="0.60"/><ellipse cx="256.8" cy="146.9" rx="5.4" ry="9.4" fill="#c8dae2" opacity="0.60"/><ellipse cx="107.2" cy="196.6" rx="4.8" ry="5.0" fill="#98afbb" opacity="0.35"/><ellipse cx="50.1" cy="232.0" rx="7.7" ry="12.3" fill="#c8dae2" opacity="0.35"/><ellipse cx="161.5" cy="200.9" rx="4.3" ry="10.3" fill="#c8dae2" opacity="0.35"/><ellipse cx="120.9" cy="215.8" rx="7.0" ry="12.0" fill="#c8dae2" opacity="0.35"/><ellipse cx="111.3" cy="148.3" rx="5.2" ry="11.6" fill="#c8dae2" opacity="0.60"/><ellipse cx="207.6" cy="195.3" rx="8.2" ry="6.5" fill="#dbe7ec" opacity="0.35"/><ellipse cx="9.0" cy="140.1" rx="6.0" ry="9.2" fill="#c8dae2" opacity="0.60"/><ellipse cx="217.7" cy="216.9" rx="6.5" ry="12.3" fill="#98afbb" opacity="0.35"/><ellipse cx="117.9" cy="139.4" rx="6.6" ry="12.9" fill="#98afbb" opacity="0.60"/><ellipse cx="174.1" cy="153.8" rx="6.3" ry="5.7" fill="#98afbb" opacity="0.60"/><ellipse cx="124.7" cy="229.4" rx="5.6" ry="5.1" fill="#c8dae2" opacity="0.35"/><ellipse cx="176.7" cy="238.6" rx="4.3" ry="6.0" fill="#c8dae2" opacity="0.35"/><ellipse cx="124.7" cy="166.1" rx="5.7" ry="11.0" fill="#b3c9d3" opacity="0.60"/><ellipse cx="243.6" cy="175.3" rx="7.4" ry="5.7" fill="#b3c9d3" opacity="0.60"/><ellipse cx="166.0" cy="210.3" rx="7.0" ry="12.1" fill="#98afbb" opacity="0.35"/><ellipse cx="241.2" cy="143.4" rx="3.1" ry="5.1" fill="#c8dae2" opacity="0.60"/><ellipse cx="171.8" cy="221.4" rx="5.3" ry="7.5" fill="#c8dae2" opacity="0.35"/><ellipse cx="158.4" cy="235.7" rx="6.7" ry="7.5" fill="#98afbb" opacity="0.35"/><ellipse cx="250.5" cy="212.2" rx="7.1" ry="6.2" fill="#98afbb" opacity="0.35"/><ellipse cx="210.5" cy="175.1" rx="6.8" ry="8.3" fill="#b3c9d3" opacity="0.60"/><ellipse cx="101.8" cy="218.2" rx="7.7" ry="9.5" fill="#dbe7ec" opacity="0.35"/><ellipse cx="77.2" cy="144.2" rx="8.2" ry="10.8" fill="#dbe7ec" opacity="0.60"/><ellipse cx="4.1" cy="153.4" rx="6.5" ry="12.8" fill="#dbe7ec" opacity="0.60"/><ellipse cx="65.0" cy="177.5" rx="6.6" ry="12.2" fill="#98afbb" opacity="0.60"/><ellipse cx="213.2" cy="166.9" rx="4.9" ry="7.1" fill="#c8dae2" opacity="0.60"/><ellipse cx="41.5" cy="231.9" rx="4.7" ry="6.1" fill="#c8dae2" opacity="0.35"/><ellipse cx="235.1" cy="239.3" rx="4.6" ry="11.8" fill="#b3c9d3" opacity="0.35"/><ellipse cx="213.1" cy="207.8" rx="5.1" ry="5.7" fill="#98afbb" opacity="0.35"/><ellipse cx="146.2" cy="219.3" rx="7.7" ry="10.8" fill="#b3c9d3" opacity="0.35"/><ellipse cx="259.3" cy="169.6" rx="7.1" ry="8.7" fill="#c8dae2" opacity="0.60"/><ellipse cx="54.5" cy="164.0" rx="7.7" ry="8.7" fill="#c8dae2" opacity="0.60"/><ellipse cx="23.2" cy="220.3" rx="4.4" ry="9.6" fill="#c8dae2" opacity="0.35"/><ellipse cx="236.8" cy="228.3" rx="5.9" ry="9.7" fill="#dbe7ec" opacity="0.35"/><ellipse cx="49.9" cy="157.6" rx="7.8" ry="7.3" fill="#b3c9d3" opacity="0.60"/><ellipse cx="152.6" cy="174.6" rx="4.5" ry="12.4" fill="#b3c9d3" opacity="0.60"/><ellipse cx="130.2" cy="226.4" rx="6.8" ry="11.3" fill="#dbe7ec" opacity="0.35"/><ellipse cx="41.2" cy="198.9" rx="4.7" ry="9.9" fill="#dbe7ec" opacity="0.35"/><ellipse cx="24.8" cy="158.9" rx="6.5" ry="6.7" fill="#98afbb" opacity="0.60"/><ellipse cx="244.3" cy="166.5" rx="8.7" ry="11.1" fill="#c8dae2" opacity="0.60"/><ellipse cx="216.2" cy="236.3" rx="8.1" ry="7.7" fill="#dbe7ec" opacity="0.35"/><ellipse cx="262.6" cy="176.6" rx="3.3" ry="9.5" fill="#c8dae2" opacity="0.60"/><ellipse cx="229.9" cy="184.7" rx="8.2" ry="10.1" fill="#c8dae2" opacity="0.60"/><ellipse cx="243.4" cy="210.1" rx="4.5" ry="9.5" fill="#c8dae2" opacity="0.35"/><ellipse cx="169.1" cy="235.6" rx="4.1" ry="11.8" fill="#98afbb" opacity="0.35"/><ellipse cx="97.9" cy="162.0" rx="4.0" ry="12.5" fill="#b3c9d3" opacity="0.60"/><ellipse cx="248.5" cy="144.0" rx="8.0" ry="5.4" fill="#c8dae2" opacity="0.60"/><ellipse cx="207.6" cy="210.4" rx="3.3" ry="6.2" fill="#98afbb" opacity="0.35"/><ellipse cx="199.3" cy="233.8" rx="6.5" ry="8.5" fill="#dbe7ec" opacity="0.35"/><ellipse cx="172.3" cy="186.0" rx="4.5" ry="6.0" fill="#dbe7ec" opacity="0.60"/><ellipse cx="127.1" cy="155.2" rx="7.8" ry="12.3" fill="#b3c9d3" opacity="0.60"/><ellipse cx="235.5" cy="185.7" rx="7.8" ry="6.3" fill="#b3c9d3" opacity="0.60"/><ellipse cx="219.9" cy="145.9" rx="8.3" ry="6.1" fill="#dbe7ec" opacity="0.60"/><ellipse cx="118.1" cy="147.9" rx="8.1" ry="10.0" fill="#98afbb" opacity="0.60"/><ellipse cx="119.4" cy="172.7" rx="5.9" ry="10.0" fill="#b3c9d3" opacity="0.60"/><ellipse cx="37.7" cy="160.6" rx="4.1" ry="8.6" fill="#c8dae2" opacity="0.60"/><ellipse cx="234.8" cy="182.8" rx="4.6" ry="8.3" fill="#b3c9d3" opacity="0.60"/><ellipse cx="41.1" cy="165.7" rx="5.0" ry="6.3" fill="#dbe7ec" opacity="0.60"/><ellipse cx="129.6" cy="170.4" rx="3.7" ry="12.8" fill="#98afbb" opacity="0.60"/><ellipse cx="15.0" cy="229.3" rx="6.4" ry="11.7" fill="#b3c9d3" opacity="0.35"/><ellipse cx="31.5" cy="215.0" rx="5.6" ry="7.1" fill="#dbe7ec" opacity="0.35"/><ellipse cx="63.0" cy="162.3" rx="4.7" ry="12.2" fill="#98afbb" opacity="0.60"/><ellipse cx="15.2" cy="212.1" rx="3.9" ry="10.1" fill="#dbe7ec" opacity="0.35"/><ellipse cx="116.7" cy="189.8" rx="5.7" ry="11.3" fill="#b3c9d3" opacity="0.60"/><ellipse cx="249.1" cy="167.2" rx="5.6" ry="12.3" fill="#dbe7ec" opacity="0.60"/><ellipse cx="57.6" cy="196.3" rx="8.1" ry="9.2" fill="#b3c9d3" opacity="0.35"/><ellipse cx="60.8" cy="155.9" rx="8.0" ry="12.1" fill="#c8dae2" opacity="0.60"/><ellipse cx="192.9" cy="215.7" rx="4.2" ry="9.9" fill="#b3c9d3" opacity="0.35"/><ellipse cx="186.8" cy="220.8" rx="4.2" ry="5.5" fill="#dbe7ec" opacity="0.35"/><ellipse cx="193.4" cy="179.6" rx="6.1" ry="7.8" fill="#c8dae2" opacity="0.60"/><ellipse cx="74.4" cy="203.2" rx="3.5" ry="8.3" fill="#98afbb" opacity="0.35"/><ellipse cx="201.4" cy="151.6" rx="4.5" ry="9.5" fill="#dbe7ec" opacity="0.60"/><ellipse cx="260.2" cy="141.7" rx="6.4" ry="11.9" fill="#dbe7ec" opacity="0.60"/><ellipse cx="94.0" cy="233.1" rx="3.7" ry="10.7" fill="#c8dae2" opacity="0.35"/><ellipse cx="215.6" cy="226.3" rx="7.7" ry="11.9" fill="#dbe7ec" opacity="0.35"/><ellipse cx="152.1" cy="229.6" rx="8.2" ry="12.6" fill="#dbe7ec" opacity="0.35"/><ellipse cx="130.6" cy="190.4" rx="3.1" ry="12.7" fill="#b3c9d3" opacity="0.60"/><ellipse cx="59.1" cy="156.6" rx="4.9" ry="9.4" fill="#c8dae2" opacity="0.60"/><ellipse cx="252.2" cy="140.0" rx="4.6" ry="11.7" fill="#b3c9d3" opacity="0.60"/><ellipse cx="168.1" cy="185.3" rx="7.2" ry="5.8" fill="#b3c9d3" opacity="0.60"/><ellipse cx="229.6" cy="211.1" rx="4.6" ry="8.7" fill="#c8dae2" opacity="0.35"/><ellipse cx="154.7" cy="215.7" rx="3.7" ry="8.2" fill="#c8dae2" opacity="0.35"/><ellipse cx="36.2" cy="198.4" rx="3.9" ry="9.6" fill="#b3c9d3" opacity="0.35"/><ellipse cx="197.1" cy="154.8" rx="8.6" ry="8.1" fill="#c8dae2" opacity="0.60"/><ellipse cx="111.0" cy="223.7" rx="5.4" ry="12.5" fill="#c8dae2" opacity="0.35"/><ellipse cx="205.1" cy="172.5" rx="8.0" ry="10.7" fill="#b3c9d3" opacity="0.60"/><ellipse cx="222.6" cy="195.6" rx="7.9" ry="11.8" fill="#dbe7ec" opacity="0.35"/><ellipse cx="14.1" cy="190.8" rx="4.5" ry="8.4" fill="#dbe7ec" opacity="0.60"/><ellipse cx="167.0" cy="175.2" rx="3.4" ry="8.5" fill="#b3c9d3" opacity="0.60"/><ellipse cx="133.3" cy="140.1" rx="5.5" ry="8.2" fill="#b3c9d3" opacity="0.60"/><ellipse cx="263.3" cy="184.3" rx="7.9" ry="12.1" fill="#c8dae2" opacity="0.60"/><rect x="0" y="205" width="264" height="59" fill="url(#dark)" /></symbol></svg>
<div id="strip"></div>
<div id="card"></div>
<div class="hline" style="left:49px;top:168px;width:2482px;"></div>
<div class="vline" style="left:773px;top:170px;height:1500px;"></div>
<div class="hline" style="left:775px;top:960px;width:1756px;"></div>

<!-- header row -->
<div id="thumb" style="position:absolute;left:168px;top:61px;width:79px;height:79px;border-radius:5px;overflow:hidden;"><svg width="79" height="79" viewBox="0 0 264 264" style="display:block"><use href="#ph"/><rect x="0" y="190" width="264" height="74" fill="url(#thl)"/><defs><linearGradient id="thl" x1="0" y1="0" x2="0" y2="1"><stop offset="0" stop-color="#8aa0ac" stop-opacity="0"/><stop offset="1" stop-color="#7b919d" stop-opacity="0.75"/></linearGradient></defs></svg></div>
<div class="abs dark" id="h_title" style="left:282.50px;top:82.90px;font-size:31.05px;letter-spacing:0.64px;">Snowy sauna</div>
<div class="abs gray" id="h_price" style="left:2101px;top:82.81px;font-size:29.36px;letter-spacing:1.5px;"><span style="display:inline-block;transform:scaleX(1.33);transform-origin:0 0;margin-right:6.5px;">€</span>45</div>
<div class="abs gray" id="h_date" style="left:2297.00px;top:82.81px;font-size:30.01px;letter-spacing:-0.09px;">11/26/21</div>

<!-- left column -->
<div id="dots" style="position:absolute;left:670px;top:233px;">
<div style="position:absolute;left:0;top:0;width:9px;height:9px;border-radius:50%;background:#2d3e4d;"></div>
<div style="position:absolute;left:15px;top:0;width:9px;height:9px;border-radius:50%;background:#2d3e4d;"></div>
<div style="position:absolute;left:30px;top:0;width:9px;height:9px;border-radius:50%;background:#2d3e4d;"></div>
</div>
<div id="photo" style="position:absolute;left:279px;top:276px;width:264px;height:264px;border-radius:10px;overflow:hidden;"><svg width="264" height="264" viewBox="0 0 264 264" style="display:block"><use href="#ph"/></svg>
<svg style="position:absolute;left:208px;top:222px" width="35" height="17" viewBox="0 0 35 17"><path d="M0 0H18V13H0Z" fill="#fff"/><circle cx="6" cy="4.6" r="1.9" fill="#26323b"/><path d="M4.6 13 L7.4 8.9 L9.5 10.6 L12.6 6.8 L16.4 13Z" fill="#26323b"/><rect x="0" y="14" width="18" height="3" fill="#fff"/><path d="M25.1 2.4 L28.9 0.1 L31.7 0.1 L31.7 17 L28.9 17 L28.9 3.3 L26.5 4.8 L25.1 4.8Z" fill="#fff"/></svg></div></div>
<div id="avatar" style="position:absolute;left:480px;top:305px;width:106px;height:106px;border:6px solid #fff;border-radius:50%;overflow:hidden;background:#8297a4;"><svg width="106" height="106" viewBox="0 0 106 106" style="display:block">
<defs><radialGradient id="face" cx="0.45" cy="0.4" r="0.6"><stop offset="0" stop-color="#d6aaa5"/><stop offset="1" stop-color="#b48480"/></radialGradient>
<filter id="bl2" x="-20%" y="-20%" width="140%" height="140%"><feGaussianBlur stdDeviation="2"/></filter>
<filter id="bl1" x="-20%" y="-20%" width="140%" height="140%"><feGaussianBlur stdDeviation="0.8"/></filter></defs>
<rect width="106" height="106" fill="#8a9eab"/>
<g filter="url(#bl2)">
<path d="M-5 -5H65V50H-5Z" fill="#a9bac5"/>
<rect x="18" y="10" width="12" height="46" fill="#222b31"/>
<rect x="-5" y="57" width="42" height="11" fill="#d8dfe3"/>
<rect x="86" y="57" width="25" height="11" fill="#d0d8dc"/>
<rect x="93" y="18" width="16" height="38" fill="#34434c"/>
</g>
<g filter="url(#bl1)">
<ellipse cx="64" cy="34" rx="32" ry="27" fill="#b9bec1"/>
<path d="M38 34 Q58 14 92 30" stroke="#cdd1d3" stroke-width="5" fill="none" opacity="0.6"/>
<ellipse cx="64" cy="59" rx="25" ry="33" fill="url(#face)"/>
<path d="M45 50 Q52 45 59 50" stroke="#7a5a5a" stroke-width="3" fill="none"/>
<path d="M68 50 Q75 45 82 50" stroke="#7a5a5a" stroke-width="3" fill="none"/>
<path d="M60 56 L57 66 L63 67" stroke="#9b6d6a" stroke-width="2" fill="none"/>
<path d="M51 73 Q64 79 77 72 L75 77 Q64 82 53 77Z" fill="#efe5e3"/>
<path d="M49 72 Q64 76 79 70" stroke="#4e3032" stroke-width="1.8" fill="none"/>
<path d="M12 106 L20 66 L42 62 L56 88 L58 106Z" fill="#12171b"/>
<path d="M56 106 L62 92 L84 76 L100 72 L108 80 L108 106Z" fill="#58697a"/>
<path d="M64 106 L72 90 L92 78" stroke="#2c3940" stroke-width="3" fill="none"/>
</g>
</svg></div>

<div class="abs" id="l_title" style="left:294.50px;top:615.00px;font-size:35.86px;font-weight:normal;-webkit-text-stroke:1.3px currentColor;color:#2c3e50;letter-spacing:1.56px;">Snowy sauna</div>
<div class="abs" id="l_price" style="left:382.5px;top:672.81px;font-size:28.49px;color:#b2b2b2;letter-spacing:1.5px;"><span style="display:inline-block;transform:scaleX(1.33);transform-origin:0 0;margin-right:6.5px;">€</span>45</div>
<div class="abs blue" id="l_tx" style="left:299.00px;top:791.71px;font-size:33.70px;letter-spacing:1.00px;">Transactions</div>
<svg id="l_tx1" style="position:absolute;left:509.6px;top:795.6px" width="13" height="25" viewBox="0 0 13 25"><path d="M0.2 3.9 L7.6 0 L12.1 0 L12.1 24.1 L8.8 24.1 L8.8 3.9 L1.6 7.3 L0.2 7.3 Z" fill="#b2b2b2"/></svg>
<div class="abs blue" id="l_rev" style="left:331.00px;top:862.00px;font-size:34.67px;letter-spacing:-0.30px;">Reviews</div>
<div class="abs" id="l_rev0" style="left:468.50px;top:861.00px;font-size:36.12px;color:#b2b2b2;letter-spacing:3.80px;">0</div>

<!-- summary -->
<div class="abs" id="s_title" style="left:929.50px;top:293.40px;font-size:40.60px;font-weight:normal;-webkit-text-stroke:1.3px currentColor;color:#b4b4b4;letter-spacing:3.20px;">Summary</div>
<div class="abs gray" id="lab1" style="left:928.50px;top:408.50px;font-size:30.91px;letter-spacing:0.43px;">Listing title</div>
<div class="abs dark" id="val1" style="left:929.50px;top:459.21px;font-size:32.86px;letter-spacing:1.38px;">Snowy sauna</div>
<div class="abs gray" id="lab2" style="left:928.50px;top:566.90px;font-size:29.09px;letter-spacing:1.24px;">Listing description</div>
<div class="abs dark" id="val2" style="left:929.00px;top:615.82px;font-size:33.56px;letter-spacing:1.29px;">Beautiful sauna in wintery landscape.</div>
<div class="abs gray" id="lab3" style="left:928.50px;top:726.00px;font-size:29.09px;letter-spacing:0.89px;">Listing ID</div>
<div class="abs blue" id="val3" style="left:928.50px;top:773.71px;font-size:33.50px;letter-spacing:0.78px;">61a0c3ef-6917-4df0-9723-bf361211550b</div>
<div class="abs gray" id="lab4" style="left:1906.00px;top:725.81px;font-size:28.53px;letter-spacing:1.57px;">Listing created</div>
<div class="abs dark" id="val4" style="left:1906.50px;top:774.11px;font-size:33.84px;letter-spacing:0.06px;">November 26, 2021</div>

<svg style="position:absolute;left:2280px;top:300px" width="29" height="29" viewBox="-1 -1 31 31"><g fill="none" stroke="#3b7dd8" stroke-width="2.6" stroke-linejoin="miter"><path d="M0.8 28.2 L4.8 17.9 L22 0.9 L28.3 7.1 L11.2 24.2 Z"/><path d="M18.6 4.6 L24.6 10.6"/><path d="M5 18.2 L11 24.2"/></g></svg>
<div class="abs blue" id="edit1" style="left:2324.00px;top:300.61px;font-size:28.95px;letter-spacing:0.67px;">Edit</div>
<!-- public data -->
<div class="abs" id="p_title" style="left:930.00px;top:1084.21px;font-size:41.72px;font-weight:normal;-webkit-text-stroke:1.3px currentColor;color:#b4b4b4;letter-spacing:1.98px;">Public data</div>
<svg style="position:absolute;left:2280px;top:1092px" width="29" height="29" viewBox="-1 -1 31 31"><g fill="none" stroke="#3b7dd8" stroke-width="2.6" stroke-linejoin="miter"><path d="M0.8 28.2 L4.8 17.9 L22 0.9 L28.3 7.1 L11.2 24.2 Z"/><path d="M18.6 4.6 L24.6 10.6"/><path d="M5 18.2 L11 24.2"/></g></svg>
<div class="abs blue" id="edit2" style="left:2324.00px;top:1092.71px;font-size:28.95px;letter-spacing:0.67px;">Edit</div>
<svg id="qmark" style="position:absolute;left:1173px;top:1087px" width="36" height="36" viewBox="0 0 36 36"><circle cx="17.5" cy="17.5" r="16.2" fill="none" stroke="#7b7b7b" stroke-width="2.5"/><path d="M13.4 14.2 Q13.4 9.9 17.6 9.9 Q21.8 9.9 21.8 13.8 Q21.8 16.4 19 17.8 Q16.9 18.9 16.9 21.3" fill="none" stroke="#7d7d7d" stroke-width="3.3" stroke-linecap="butt"/><circle cx="16.9" cy="24.8" r="2.3" fill="#7d7d7d"/></svg>
<div class="abs gray" id="amen" style="left:929.50px;top:1198.80px;font-size:31.53px;letter-spacing:0.23px;">amenities</div>
<div id="badge" style="position:absolute;left:1079px;top:1199px;width:70px;height:32px;border:2px solid #e3e3e3;border-radius:6px;"></div>
<div class="abs gray" id="badge_t" style="left:1090.00px;top:1207.80px;font-size:20.44px;letter-spacing:-0.93px;">JSON</div>
<div id="codebox" style="position:absolute;left:929px;top:1244px;width:1364px;height:366px;border:2px solid #e4e4e4;border-radius:8px;background:#fbfcfe;"></div>
<pre id="code" style="position:absolute;left:941px;top:1256px;margin:0;font-family:'Liberation Mono',monospace;font-size:26.3px;line-height:35.05px;color:#111;-webkit-text-stroke:0.5px currentColor;"><span style="display:inline-block;transform:translateY(0.5px) scaleY(0.8);">[</span>
  <span style="color:#a31515">"towels"</span>,
  <span style="color:#a31515">"bathroom"</span>,
  <span style="color:#a31515">"own_drinks"</span>,
  <span style="color:#a31515">"barbeque"</span>,
  <span style="color:#a31515">"own_food_allowed"</span>,
  <span style="color:#a31515">"swimming_pool"</span>,
  <span style="color:#a31515">"jacuzzi"</span>,
  <span style="color:#a31515">"audiovisual_entertainment"</span>
<span style="display:inline-block;transform:translateY(3px) scaleY(0.74);">]</span></pre>
</body></html>
